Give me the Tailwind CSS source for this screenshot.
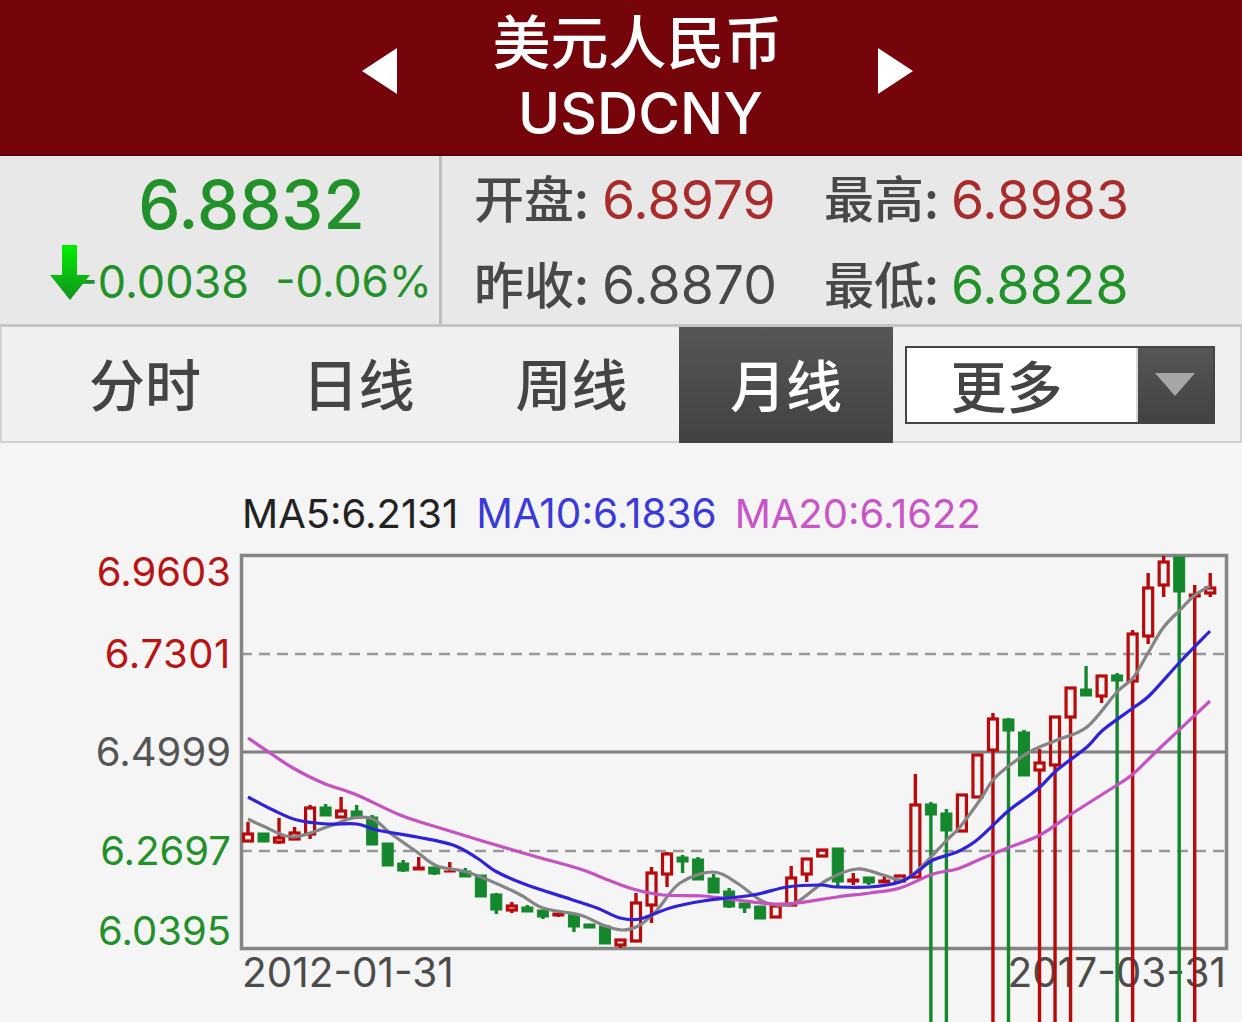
<!DOCTYPE html>
<html lang="zh">
<head>
<meta charset="utf-8">
<title>USDCNY</title>
<script src="https://cdn.jsdelivr.net/npm/@tailwindcss/browser@4"></script>
</head>
<body class="w-[1242px] h-[1022px] overflow-hidden bg-[#f5f5f5] font-['Inter','Noto_Sans_CJK_SC',sans-serif]">

<!-- 标题栏 -->
<div class="h-[156px] bg-[#75040b] border-b-2 border-[#5c0006] flex items-center justify-center pl-[33px]">
    <svg class="w-[35px] h-[46px] mt-[-12px]" viewBox="0 0 35 46"><path d="M0 23 35 0V46Z" fill="#fff"/></svg>
    <div class="w-[481px] text-center text-white mt-[-4px]">
        <div class="text-[58px] leading-[70px] font-medium font-['Noto_Sans_CJK_SC',sans-serif]">美元人民币</div>
        <div class="text-[57px] leading-[66px] mt-[7px] font-medium pl-[6px]">USDCNY</div>
    </div>
    <svg class="w-[35px] h-[46px] mt-[-12px]" viewBox="0 0 35 46"><path d="M35 23 0 0V46Z" fill="#fff"/></svg>
</div>

<!-- 行情 -->
<div class="h-[171px] bg-[#e8e8e8] flex border-b-[3px] border-[#c4c4c4]">
    <div class="w-[442px] border-r-[3px] border-[#bdbdbd] text-[#229129]">
        <div class="text-[67px] leading-[78px] mt-[10px] text-center pl-[64px] font-medium">6.8832</div>
        <div class="flex items-center mt-[-1px] pl-[50px]">
            <svg class="w-[40px] h-[55px] mt-[-8px] shrink-0 relative z-10" viewBox="0 0 40 55">
                <defs><linearGradient id="down" x1="0" y1="0" x2="0" y2="1"><stop offset="0" stop-color="#00f000"/><stop offset="1" stop-color="#148f20"/></linearGradient></defs>
                <path d="M12 0H27V30H40L20 55 0 30H12Z" fill="url(#down)"/>
            </svg>
            <div class="flex text-[45px] leading-[55px] ml-[-13px] mt-[11px] whitespace-nowrap">
                <span>-0.0038</span><span class="ml-[26px] text-[44px]">-0.06%</span>
            </div>
        </div>
    </div>
    <div class="pl-[32px] pt-[2px] grid grid-cols-[350px_330px] grid-rows-[85px_85px] text-[#484848]">
        <div class="flex items-center"><span class="w-[128px] mb-[8px] text-[50px] font-medium font-['Noto_Sans_CJK_SC',sans-serif]">开盘:</span><span class="text-[53.500px] text-[#a92c2c]">6.8979</span></div>
        <div class="flex items-center"><span class="w-[127px] mb-[8px] text-[50px] font-medium font-['Noto_Sans_CJK_SC',sans-serif]">最高:</span><span class="text-[53.500px] text-[#a92c2c]">6.8983</span></div>
        <div class="flex items-center"><span class="w-[128px] mb-[6px] text-[50px] font-medium font-['Noto_Sans_CJK_SC',sans-serif]">昨收:</span><span class="text-[53.500px]">6.8870</span></div>
        <div class="flex items-center"><span class="w-[127px] mb-[6px] text-[50px] font-medium font-['Noto_Sans_CJK_SC',sans-serif]">最低:</span><span class="text-[53.500px] text-[#229129]">6.8828</span></div>
    </div>
</div>

<!-- 周期切换 -->
<div class="h-[116px] bg-[#f0f0f0] border-x-2 border-b-2 border-[#d2d2d2] flex items-center text-[56px] font-medium text-[#444] font-['Noto_Sans_CJK_SC',sans-serif]">
    <div class="w-[216px] ml-[35px] text-center mt-[-4px]">分时</div>
    <div class="w-[215px] text-center pr-[4px] mt-[-4px]">日线</div>
    <div class="w-[211px] text-center pr-[4px] mt-[-4px]">周线</div>
    <div class="w-[214px] h-[116px] self-start pb-[5px] flex items-center justify-center text-white bg-gradient-to-b from-[#565656] to-[#424242]">月线</div>
    <div class="ml-[12px] mt-[1px] w-[310px] h-[78px] flex border-2 border-[#454545] bg-gradient-to-b from-[#565656] to-[#424242]">
        <div class="w-[231px] bg-white text-center pr-[30px] leading-[72px] border-r-2 border-[#d8d8d8]">更多</div>
        <div class="flex-1 flex items-center justify-center pr-[2px]">
            <svg class="w-[40px] h-[23px]" viewBox="0 0 40 23"><path d="M0 0H40L20 23Z" fill="#a6a6a6"/></svg>
        </div>
    </div>
</div>

<!-- K线图 -->
<div class="relative h-[579px] text-[40px]">
    <div class="pl-[242px] pt-[47px] h-[94px] leading-[48px] whitespace-nowrap text-[#222] flex gap-[18px]">
        <span>MA5:6.2131</span><span class="text-[#3a3ad8] text-[40.500px]">MA10:6.1836</span><span class="text-[#c855c8]">MA20:6.1622</span>
    </div>
    <div class="w-[231px] text-right leading-[40px]">
        <div class="mt-[15px] text-[#b81414]">6.9603</div>
        <div class="mt-[42px] text-[#b81414] tracking-[0.6px]">6.7301</div>
        <div class="mt-[58px] text-[#555]">6.4999</div>
        <div class="mt-[59px] text-[#229129]">6.2697</div>
        <div class="mt-[40px] text-[#229129]">6.0395</div>
    </div>
    <div class="flex justify-between pl-[242px] pr-[16px] leading-[44px] text-[40.500px] text-[#4c4c4c]">
        <span>2012-01-31</span><span>2017-03-31</span>
    </div>
    <svg id="chart" class="absolute left-0 top-[-443px] blur-[0.4px] pointer-events-none" width="1242" height="1022" viewBox="0 0 1242 1022" fill="none">
        <path d="M241 654H1226M241 851H1226" stroke="#999" stroke-width="2.5" stroke-dasharray="11 7"/>
        <path d="M241 752H1226" stroke="#808080" stroke-width="3"/>
        <rect x="241.500" y="555.500" width="985" height="393" stroke="#858585" stroke-width="3.500"/>
    </svg>
</div>

<script>
const RED = '#b80a0a';
const GREEN = '#15872d';
const BOTTOM = 1022;

// 每根K线: [颜色, 实体上, 实体下, 上影, 下影]
const candles = [
    ['r',834,841,822,841],['g',833,842,833,842],['r',838,842,818,844],['r',833,839,827,840],
    ['r',808,834,805,839],['g',807,816,804,816],['r',811,817,797,818],['g',811,818,805,818],
    ['g',817,845,815,845],['g',843,866,843,866],['g',863,871,860,872],['r',867,870,857,870],
    ['g',867,874,867,875],['r',871,872,862,872],['g',871,877,868,877],['g',875,897,875,897],
    ['g',894,910,893,914],['r',906,910,902,913],['g',907,912,905,912],['g',910,917,910,919],
    ['r',913,916,913,917],['g',914,927,913,932],['g',924,928,924,928],['g',926,944,926,944],
    ['r',940,945,940,948],['r',903,941,893,941],['r',873,905,867,923],['r',854,874,852,887],
    ['g',857,862,855,873],['g',859,880,857,880],['g',878,893,874,893],['g',891,907,888,908],
    ['g',903,908,903,913],['g',906,919,906,919],['r',906,917,906,918],['r',878,905,866,905],
    ['r',859,874,859,882],['r',850,856,850,856],['g',848,882,848,886],['r',879,882,873,885],
    ['g',877,883,877,885],['r',880,883,875,883],['r',876,881,876,881],['r',805,877,774,877],
    ['g',804,815,802,BOTTOM],['g',813,831,809,BOTTOM],['r',795,831,795,831],['r',755,797,755,797],
    ['r',719,750,713,BOTTOM],['g',719,731,718,BOTTOM],['g',732,776,730,776],['r',763,770,749,BOTTOM],
    ['r',717,765,717,BOTTOM],['r',688,717,687,BOTTOM],['g',689,696,666,696],['r',676,696,676,703],
    ['g',675,681,673,BOTTOM],['r',634,681,630,BOTTOM],['r',588,636,573,644],['r',562,585,556,597],
    ['g',557,592,557,BOTTOM],['r',594,597,585,BOTTOM],['r',588,593,573,597]
];

const ma5 = [[248,819],[263,826],[293,837],[330,826],[353,818],[373,819],[390,833],[417,852],[437,866],[470,873],[517,893],[543,908],[580,915],[603,925],[622,930],[640,925],[657,910],[680,883],[713,872],[737,883],[760,900],[777,905],[797,902],[827,880],[857,869],[883,875],[903,880],[920,868],[947,840],[960,827],[980,800],[993,780],[1010,765],[1033,750],[1057,740],[1087,727],[1117,692],[1133,678],[1148,653],[1163,628],[1180,610],[1195,595],[1210,586]];
const ma10 = [[248,797],[273,810],[297,820],[327,824],[357,824],[377,830],[417,837],[453,845],[477,858],[497,872],[527,885],[570,899],[597,908],[620,918],[640,919],[670,908],[703,901],[753,895],[787,887],[820,885],[837,887],[870,887],[900,882],[917,872],[933,860],[957,852],[977,840],[1007,812],[1023,800],[1040,787],[1057,770],[1087,747],[1103,730],[1133,708],[1150,695],[1180,662],[1210,631]];
const ma20 = [[248,738],[270,753],[293,768],[323,783],[357,795],[400,815],[440,828],[523,853],[580,869],[603,878],[633,889],[663,895],[703,896],[737,900],[773,904],[797,903],[837,897],[870,893],[900,888],[933,874],[957,869],[983,858],[1010,847],[1040,835],[1073,813],[1117,785],[1133,774],[1160,748],[1210,701]];

// 平滑曲线
function smoothPath(pts) {
    let d = `M${pts[0][0]} ${pts[0][1]}`;
    for (let i = 0; i < pts.length - 1; i++) {
        const p0 = pts[i - 1] || pts[i], p1 = pts[i], p2 = pts[i + 1], p3 = pts[i + 2] || p2;
        d += `C${p1[0] + (p2[0] - p0[0]) / 6} ${p1[1] + (p2[1] - p0[1]) / 6} ${p2[0] - (p3[0] - p1[0]) / 6} ${p2[1] - (p3[1] - p1[1]) / 6} ${p2[0]} ${p2[1]}`;
    }
    return d;
}

function renderChart() {
    let html = '';
    candles.forEach((c, i) => {
        const x = 248 + i * 15.52;
        const color = c[0] === 'r' ? RED : GREEN;
        html += `<path d="M${x} ${c[3]}V${c[1]}M${x} ${c[2]}V${c[4]}" stroke="${color}" stroke-width="3.4"/>`;
        if (c[0] === 'g' || c[2] - c[1] < 4) {
            html += `<rect x="${x - 5.5}" y="${c[1]}" width="11" height="${c[2] - c[1]}" fill="${color}" stroke="${color}"/>`;
        } else {
            html += `<rect x="${x - 4.5}" y="${c[1]}" width="9" height="${c[2] - c[1]}" stroke="${color}" stroke-width="3.2"/>`;
        }
    });
    html += `<path d="${smoothPath(ma5)}" stroke="#858585" stroke-width="3.2"/>`;
    html += `<path d="${smoothPath(ma20)}" stroke="#c552c0" stroke-width="3.2"/>`;
    html += `<path d="${smoothPath(ma10)}" stroke="#2f22d8" stroke-width="3.2"/>`;
    document.getElementById('chart').insertAdjacentHTML('beforeend', html);
}

renderChart();
</script>
</body>
</html>
